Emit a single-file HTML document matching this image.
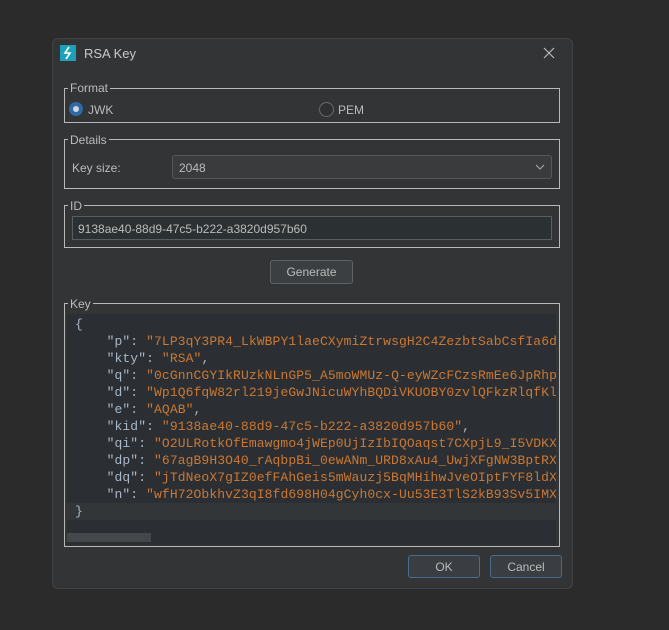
<!DOCTYPE html>
<html><head><style>
*{margin:0;padding:0;box-sizing:border-box}
body{width:669px;height:630px;background:#2b2b2b;font-family:"Liberation Sans",sans-serif;font-size:12px;color:#bbbbbb;position:relative;overflow:hidden}
.dlg{position:absolute;left:52px;top:38px;width:521px;height:551px;background:#333436;border:1px solid #404244;border-radius:6px}
.abs{position:absolute}
.grp{position:absolute;border:1px solid #b8b8b8}
.lbl{position:absolute;background:#333436;padding:0 2px;font-size:12px;color:#bbbbbb;line-height:14px}
.btn{position:absolute;border:1px solid #5e6165;background:#3c3f41;border-radius:3px;text-align:center;color:#bbbbbb;font-size:12px}
.code{position:absolute;left:67px;top:314px;width:489px;height:231px;background:#2b2f33;overflow:hidden;font-family:"Liberation Mono",monospace;font-size:13px}
.ln{height:17px;line-height:17px;white-space:pre;color:#a9b7c6;padding-left:8px;letter-spacing:0.1px}
.s{color:#cc7832}
</style></head><body>
<div class="dlg"></div>
<div class="abs" style="left:60px;top:45px;width:16px;height:16px;background:#1ba1b8"></div>
<svg class="abs" style="left:60px;top:45px" width="16" height="16"><path d="M9 2 L5 8 L10 8 L6 14" stroke="#fff" stroke-width="1.6" fill="none"/></svg>
<div class="abs" style="left:84px;top:46px;font-size:13px;color:#c8c8c8">RSA Key</div>
<svg class="abs" style="left:543px;top:47px" width="12" height="12"><path d="M1 1L11 11M11 1L1 11" stroke="#bbb" stroke-width="1.2"/></svg>

<div class="grp" style="left:64px;top:88px;width:496px;height:35px"></div>
<div class="lbl" style="left:68px;top:81px">Format</div>
<div class="abs" style="left:69px;top:102px;width:14px;height:14px;border-radius:50%;background:#2e6aa6"></div>
<div class="abs" style="left:73px;top:106px;width:6px;height:6px;border-radius:50%;background:#cfd6dd"></div>
<div class="abs" style="left:88px;top:103px;font-size:12px">JWK</div>
<div class="abs" style="left:319px;top:102px;width:15px;height:15px;border-radius:50%;border:1px solid #6a6a6a;background:#2f3032"></div>
<div class="abs" style="left:338px;top:103px">PEM</div>

<div class="grp" style="left:64px;top:139px;width:496px;height:50px"></div>
<div class="lbl" style="left:68px;top:133px">Details</div>
<div class="abs" style="left:72px;top:161px">Key size:</div>
<div class="abs" style="left:172px;top:155px;width:380px;height:24px;background:#3a3b3d;border:1px solid #55575a;border-radius:3px"></div>
<div class="abs" style="left:179px;top:161px">2048</div>
<svg class="abs" style="left:535px;top:164px" width="10" height="7"><path d="M1 1L5 5L9 1" stroke="#aaa" fill="none"/></svg>

<div class="grp" style="left:64px;top:205px;width:496px;height:43px"></div>
<div class="lbl" style="left:68px;top:199px">ID</div>
<div class="abs" style="left:72px;top:216px;width:480px;height:24px;background:#2b3133;border:1px solid #5a5d60"></div>
<div class="abs" style="left:78px;top:222px">9138ae40-88d9-47c5-b222-a3820d957b60</div>

<div class="btn" style="left:270px;top:260px;width:83px;height:24px;line-height:23px">Generate</div>

<div class="grp" style="left:64px;top:303px;width:496px;height:244px"></div>
<div class="lbl" style="left:68px;top:297px">Key</div>
<div class="code">
<div style="height:2px"></div>
<div class="ln">{</div>
<div class="ln">    "p": <span class="s">"7LP3qY3PR4_LkWBPY1laeCXymiZtrwsgH2C4ZezbtSabCsfIa6dXX</span></div>
<div class="ln">    "kty": <span class="s">"RSA"</span>,</div>
<div class="ln">    "q": <span class="s">"0cGnnCGYIkRUzkNLnGP5_A5moWMUz-Q-eyWZcFCzsRmEe6JpRhpXX</span></div>
<div class="ln">    "d": <span class="s">"Wp1Q6fqW82rl219jeGwJNicuWYhBQDiVKUOBY0zvlQFkzRlqfKlXX</span></div>
<div class="ln">    "e": <span class="s">"AQAB"</span>,</div>
<div class="ln">    "kid": <span class="s">"9138ae40-88d9-47c5-b222-a3820d957b60"</span>,</div>
<div class="ln">    "qi": <span class="s">"O2ULRotkOfEmawgmo4jWEp0UjIzIbIQOaqst7CXpjL9_I5VDKXXX</span></div>
<div class="ln">    "dp": <span class="s">"67agB9H3O40_rAqbpBi_0ewANm_URD8xAu4_UwjXFgNW3BptRXXX</span></div>
<div class="ln">    "dq": <span class="s">"jTdNeoX7gIZ0efFAhGeis5mWauzj5BqMHihwJveOIptFYF8ldXXX</span></div>
<div class="ln">    "n": <span class="s">"wfH72ObkhvZ3qI8fd698H04gCyh0cx-Uu53E3TlS2kB93Sv5IMXXX</span></div>
<div class="ln" style="background:#323638">}</div>
<div class="abs" style="left:0;top:219px;width:84px;height:9px;background:#45484b"></div>
</div>

<div class="btn" style="left:408px;top:555px;width:72px;height:23px;line-height:22px;border-color:#4a6a8a;background:#3a3e42">OK</div>
<div class="btn" style="left:490px;top:555px;width:72px;height:23px;line-height:22px;border-color:#4a6a8a;background:#3a3e42">Cancel</div>
</body></html>
